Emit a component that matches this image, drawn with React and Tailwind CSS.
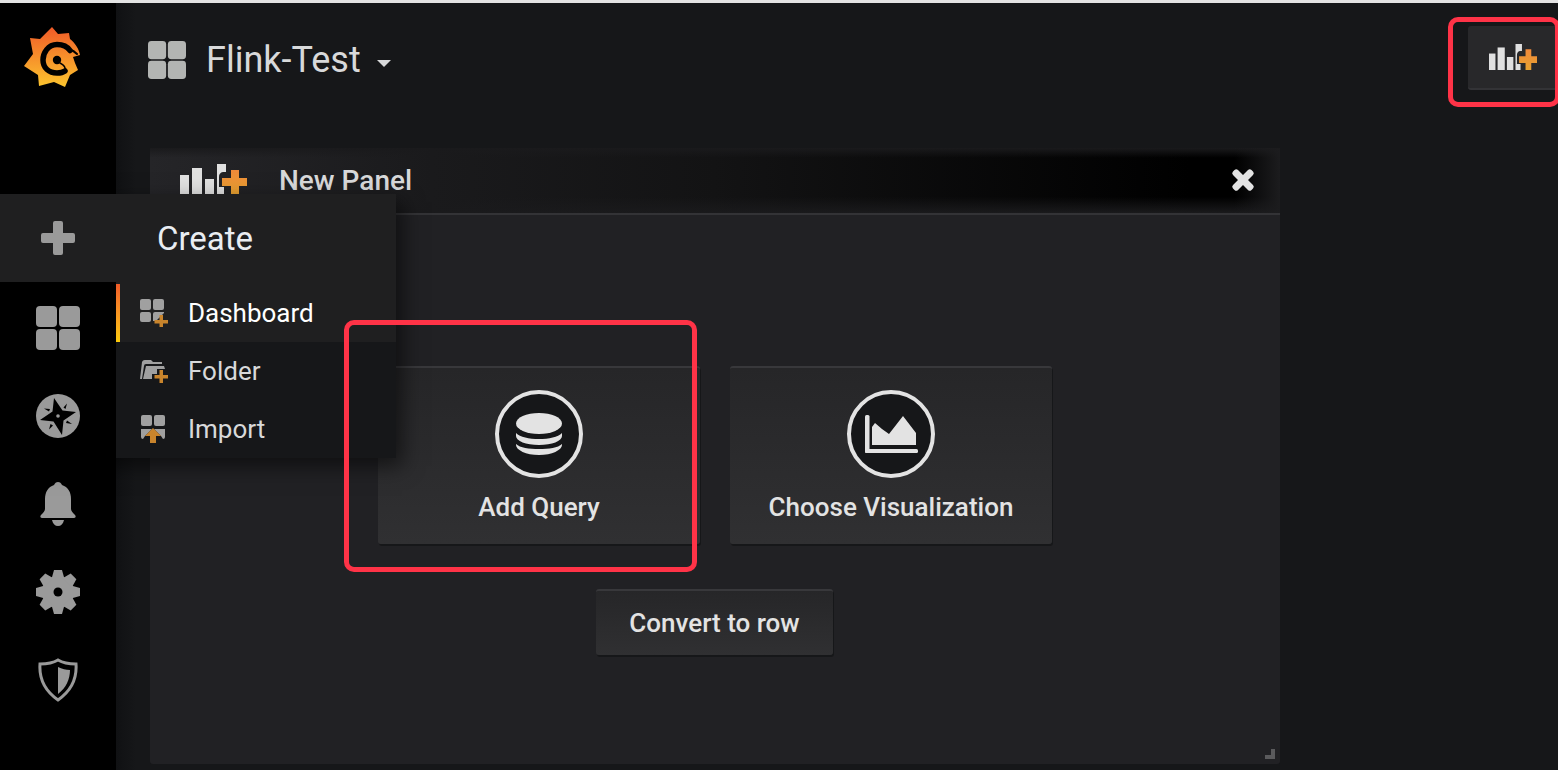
import React from "react";

const font = { fontFamily: "Roboto, sans-serif" };

const Grid = ({ className }) => (
  <svg viewBox="0 0 44 44" className={className} fill="currentColor">
    <rect x="0" y="0" width="21" height="21" rx="4" />
    <rect x="23" y="0" width="21" height="21" rx="4" />
    <rect x="0" y="23" width="21" height="21" rx="4" />
    <rect x="23" y="23" width="21" height="21" rx="4" />
  </svg>
);

const BarsPlus = ({ className, id }) => (
  <svg viewBox="0 0 67 30" preserveAspectRatio="none" className={className}>
    <defs>
      <linearGradient id={id} x1="0" y1="0" x2="0" y2="1">
        <stop offset="0" stopColor="#f0893a" />
        <stop offset="1" stopColor="#e8a230" />
      </linearGradient>
    </defs>
    <g fill="#e0e0e0">
      <rect x="0" y="11" width="9" height="19" />
      <rect x="12" y="4" width="10" height="26" />
      <rect x="25" y="15" width="9" height="15" />
      <path d="M37 0h9v8h-3a5 5 0 0 0-4 5v10h5v7h-7z" />
    </g>
    <path d="M51 6h8v8h8v8h-8v8h-8v-8h-9v-8h9z" fill={`url(#${id})`} />
  </svg>
);

const Logo = () => (
  <svg viewBox="0 0 58 62" className="w-[58px] h-[62px]">
    <defs>
      <linearGradient id="logoFill" x1="0" y1="0" x2="0" y2="1">
        <stop offset="0" stopColor="#f05a28" />
        <stop offset="1" stopColor="#fcc52e" />
      </linearGradient>
    </defs>
    <path
      fill="url(#logoFill)"
      d="M29 0L35 7L46 6L47 12C52 16 56 22 57 28L50 30L52 36L55 43L47 48L42 60L31 55L16 59L15 48L1 39L10 27L7 11L17 12Z"
    />
    <g fill="none" stroke="#000" strokeLinecap="round">
      <path d="M54 27C52 25 50 23.500 47 22.500" strokeWidth="2" />
      <path d="M47 23.500C44 19 39 17.500 34 17.500C25 17.500 20 26 20 33C20 41 26 46 34 46C37 46 40 45.500 42 44" strokeWidth="5.500" />
      <path d="M42 44C43 41 41 38 37 36" strokeWidth="1.500" />
    </g>
    <circle cx="34" cy="33" r="4.200" fill="#000" />
  </svg>
);

const Plus = ({ className }) => (
  <svg viewBox="0 0 34 34" className={className} fill="currentColor">
    <path d="M12 2a2 2 0 0 1 2-2h6a2 2 0 0 1 2 2v10h10a2 2 0 0 1 2 2v6a2 2 0 0 1-2 2H22v10a2 2 0 0 1-2 2h-6a2 2 0 0 1-2-2V22H2a2 2 0 0 1-2-2v-6a2 2 0 0 1 2-2h10z" />
  </svg>
);

const Compass = () => (
  <svg viewBox="0 0 44 44" className="w-[44px] h-[44px]">
    <circle cx="22" cy="22" r="22" fill="#9a9a9a" />
    <path d="M18 4L26.500 16.500L40 18L27.500 26.500L26 41L17.500 27.500L4 26L16.500 17.500Z" fill="#000" />
    <path d="M31 9.500L27.500 13.500L29.500 15zM36 30L31 26.500L30 29zM8 14.500L13 17.500L14 15zM13 35.500L14.500 30L17 31.500z" fill="#000" />
    <circle cx="22" cy="22" r="1.800" fill="#9a9a9a" />
  </svg>
);

const Bell = () => (
  <svg viewBox="0 0 36 44" className="w-[36px] h-[44px]" fill="#9a9a9a">
    <path d="M18 0c2 0 3 1 4 3 6 2 9 7 9 14v10c0 2 2 4 4 6 1 1 1 3-1 3H2c-2 0-2-2-1-3 2-2 4-4 4-6V17C5 10 8 5 14 3c1-2 2-3 4-3z" />
    <path d="M12 38h12c-1 4-3 6-6 6s-5-2-6-6z" />
  </svg>
);

const Gear = () => (
  <svg viewBox="0 0 44 44" className="w-[44px] h-[44px]">
    <g fill="#9a9a9a">
      <circle cx="22" cy="22" r="16" />
      {[0, 45, 90, 135, 180, 225, 270, 315].map((deg) => (
        <path key={deg} d="M18 0h8l2.5 9h-13z" transform={`rotate(${deg} 22 22)`} />
      ))}
    </g>
    <circle cx="22" cy="22" r="4.5" fill="#000" />
  </svg>
);

const Shield = () => (
  <svg viewBox="0 0 40 44" className="w-[40px] h-[44px]">
    <path
      d="M20 2c5 3 11 4 18 4 1 14-5 27-18 36C7 33 1 20 2 6c7 0 13-1 18-4z"
      fill="none"
      stroke="#9a9a9a"
      strokeWidth="3"
    />
    <path d="M20 9c4 2 8 3 12 3 0 9-4 18-12 24z" fill="#9a9a9a" />
  </svg>
);

const SmallGridPlus = () => (
  <svg viewBox="0 0 28 28" className="w-[28px] h-[28px]">
    <g fill="#a0a0a0">
      <rect x="0" y="0" width="11" height="11" rx="2" />
      <rect x="13" y="0" width="11" height="11" rx="2" />
      <rect x="0" y="13" width="11" height="10" rx="2" />
      <path d="M13 15a2 2 0 0 1 2-2h9v1l-8 8h-3z" />
    </g>
    <path d="M19.5 16h3.5v5h5v3.5h-5v3.5h-3.5v-3.5h-5V21h5z" fill="#c8842c" />
  </svg>
);

const FolderPlus = () => (
  <svg viewBox="0 0 28 24" className="w-[28px] h-[24px]">
    <path
      d="M0 20L2 3a3 3 0 0 1 3-2h6l2 2h9v2H6a2 2 0 0 0-2 2L2 20zM6 7h18l1 3H17v5h-5v5H3z"
      fill="#a0a0a0"
    />
    <path d="M19.5 11h3.5v5h5v3.5h-5v4.5h-3.5v-4.5h-5V16h5z" fill="#c8842c" />
  </svg>
);

const ImportIcon = () => (
  <svg viewBox="0 0 26 28" className="w-[26px] h-[28px]">
    <g fill="#a0a0a0">
      <rect x="1" y="0" width="11" height="11" rx="2" />
      <rect x="14" y="0" width="11" height="11" rx="2" />
      <path d="M1 14h11l-7 7-2 3a2 2 0 0 1-2-2z" />
      <path d="M25 14H14l7 7 2 3a2 2 0 0 0 2-2z" />
    </g>
    <path d="M13 13l8 8h-5v7h-6v-7H5z" fill="#c8842c" />
  </svg>
);

const DbIcon = () => (
  <svg viewBox="0 0 46 42" className="w-[46px] h-[42px]" fill="#e3e3e3">
    <ellipse cx="23" cy="10.5" rx="23" ry="10.5" />
    <path d="M0 20c4 4 13 6 23 6s19-2 23-6v3c0 5-10 9-23 9S0 28 0 23z" />
    <path d="M0 31c4 4 13 5 23 5s19-1 23-5v1c0 5-10 10-23 10S0 37 0 32z" />
  </svg>
);

const ChartIcon = () => (
  <svg viewBox="0 0 53 38" className="w-[53px] h-[38px]" fill="#e3e3e3">
    <rect x="0" y="0" width="4.5" height="38" rx="1.5" />
    <rect x="0" y="34" width="53" height="4" rx="1.5" />
    <path d="M7 30V12L10 8L17 14L24 19L38 1L51 18V30z" />
  </svg>
);

const CardButton = ({ icon, label }) => (
  <div className="w-[322px] h-[178px] flex flex-col items-center rounded-[3px] border-t-2 border-t-[#38383b] bg-gradient-to-b from-[#262628] to-[#303032] shadow-[1px_2px_0_#161719]">
    <div className="mt-[22px] w-[88px] h-[88px] rounded-full border-[4px] border-[#e3e3e3] bg-[#161719] flex items-center justify-center">
      {icon}
    </div>
    <span className="mt-[12px] text-[26px] leading-[34px] font-medium text-[#e3e3e3]">{label}</span>
  </div>
);

const RedBox = ({ className }) => (
  <div className={`absolute border-[5px] border-[#ff3347] rounded-[10px] ${className}`} />
);

const SideIcon = ({ children }) => (
  <div className="h-[88px] flex items-center justify-center">{children}</div>
);

export default function App() {
  return (
    <div className="relative w-[1558px] h-[770px] overflow-hidden flex flex-col bg-[#161719]" style={font}>
      <div className="h-[3px] bg-[#e3e3e3]" />
      <div className="flex-1 flex">
        <aside className="w-[116px] bg-black flex flex-col items-center text-[#9a9a9a]">
          <div className="h-[193px] pt-[24px] -ml-[12px]">
            <Logo />
          </div>
          <div className="h-[88px] self-stretch" />
          <SideIcon>
            <Grid className="w-[44px] h-[44px]" />
          </SideIcon>
          <SideIcon>
            <Compass />
          </SideIcon>
          <SideIcon>
            <Bell />
          </SideIcon>
          <SideIcon>
            <Gear />
          </SideIcon>
          <SideIcon>
            <Shield />
          </SideIcon>
        </aside>

        <main className="flex-1 flex flex-col pl-[34px] pr-[278px] pb-[6px] bg-gradient-to-r from-[#101113] via-[#161719] to-[#161719] bg-[length:40px_100%] bg-no-repeat">
          <header className="h-[145px] flex items-start">
            <div className="flex items-center h-[38px] mt-[38px] -ml-[2px] text-[#b3b5b3]">
              <Grid className="w-[38px] h-[38px]" />
              <span className="ml-[20px] text-[36px] leading-[38px] text-[#d8d9da]">Flink-Test</span>
              <span className="ml-[16px] mt-[6px] w-0 h-0 border-x-[7px] border-x-transparent border-t-[7px] border-t-[#d8d9da]" />
            </div>
          </header>

          <section className="flex-1 flex flex-col rounded-[3px] bg-[#212124]">
            <div className="h-[67px] flex items-center pl-[30px] pr-[25px] border-b-2 border-b-[#333336] bg-[linear-gradient(to_left,#1c1c1e,transparent_4%),linear-gradient(to_bottom,#1a1a1c,transparent_15%,transparent_75%,#1a1a1c),linear-gradient(to_right,#252528_0%,#1a1a1c_25%,#131314_50%,#000000_92%,#000000_100%)]">
              <BarsPlus id="barsPanel" className="w-[67px] h-[30px] -mt-[3px]" />
              <span className="ml-[32px] text-[28px] font-medium text-[#d8d9da]">New Panel</span>
              <svg viewBox="0 0 24 24" className="ml-auto w-[24px] h-[24px] -mt-[2px]" fill="#e3e3e3">
                <path d="M7 2l5 5 5-5a2.5 2.5 0 0 1 3.5 0l1.500 1.500a2.500 2.500 0 0 1 0 3.500l-5 5 5 5a2.500 2.500 0 0 1 0 3.500l-1.500 1.500a2.500 2.500 0 0 1-3.500 0l-5-5-5 5a2.500 2.500 0 0 1-3.500 0l-1.500-1.500a2.500 2.500 0 0 1 0-3.500l5-5-5-5a2.500 2.500 0 0 1 0-3.500l1.500-1.500a2.500 2.500 0 0 1 3.500 0z" />
              </svg>
            </div>

            <div className="relative flex-1 flex flex-col items-center pt-[151px]">
              <div className="flex gap-[30px]">
                <CardButton label="Add Query" icon={<DbIcon />} />
                <CardButton label="Choose Visualization" icon={<ChartIcon />} />
              </div>
              <button className="mt-[45px] -ml-[1px] w-[237px] h-[66px] rounded-[3px] border-t-2 border-t-[#38383b] bg-gradient-to-b from-[#262628] to-[#303032] shadow-[1px_2px_0_#161719] text-[26px] font-medium text-[#e3e3e3]">
                Convert to row
              </button>
              <div className="absolute right-[5px] bottom-[5px] w-[10px] h-[10px] border-r-[4px] border-b-[4px] border-[#5a5a5c]" />
            </div>
          </section>
        </main>
      </div>

      {/* top right add panel button */}
      <div className="absolute left-[1468px] top-[26px] w-[90px] h-[64px] rounded-l-[3px] bg-[#28282a] border-b-2 border-b-[#333336] flex items-center justify-center">
        <BarsPlus id="barsTop" className="w-[48px] h-[26px]" />
      </div>

      {/* Create flyout */}
      <div className="absolute left-0 top-[194px] w-[396px] shadow-[6px_8px_20px_rgba(0,0,0,0.55)]">
        <div className="h-[88px] flex items-center bg-[#1f1f20]">
          <div className="w-[116px] flex justify-center text-[#9a9a9a]">
            <Plus className="w-[34px] h-[34px]" />
          </div>
          <span className="ml-[41px] mt-[2px] text-[33px] text-[#e9edf2]">Create</span>
        </div>
        <div className="ml-[116px] bg-[#161719]">
          <div className="h-[62px] -mt-[2px] pt-[4px] flex items-center relative bg-[#1f1f20] text-[#ffffff]">
            <div className="absolute left-0 top-[4px] bottom-0 w-[4px] bg-gradient-to-b from-[#f05a28] to-[#fbca0a]" />
            <div className="ml-[24px] w-[48px]">
              <SmallGridPlus />
            </div>
            <span className="text-[26px]">Dashboard</span>
          </div>
          <div className="h-[58px] flex items-center text-[#d8d9da]">
            <div className="ml-[24px] w-[48px]">
              <FolderPlus />
            </div>
            <span className="text-[26px]">Folder</span>
          </div>
          <div className="h-[58px] flex items-center text-[#d8d9da]">
            <div className="ml-[24px] w-[48px]">
              <ImportIcon />
            </div>
            <span className="text-[26px]">Import</span>
          </div>
        </div>
      </div>

      {/* annotation boxes lie over everything */}
      <RedBox className="left-[1448px] top-[17px] w-[112px] h-[90px]" />
      <RedBox className="left-[344px] top-[320px] w-[353px] h-[252px]" />
    </div>
  );
}
